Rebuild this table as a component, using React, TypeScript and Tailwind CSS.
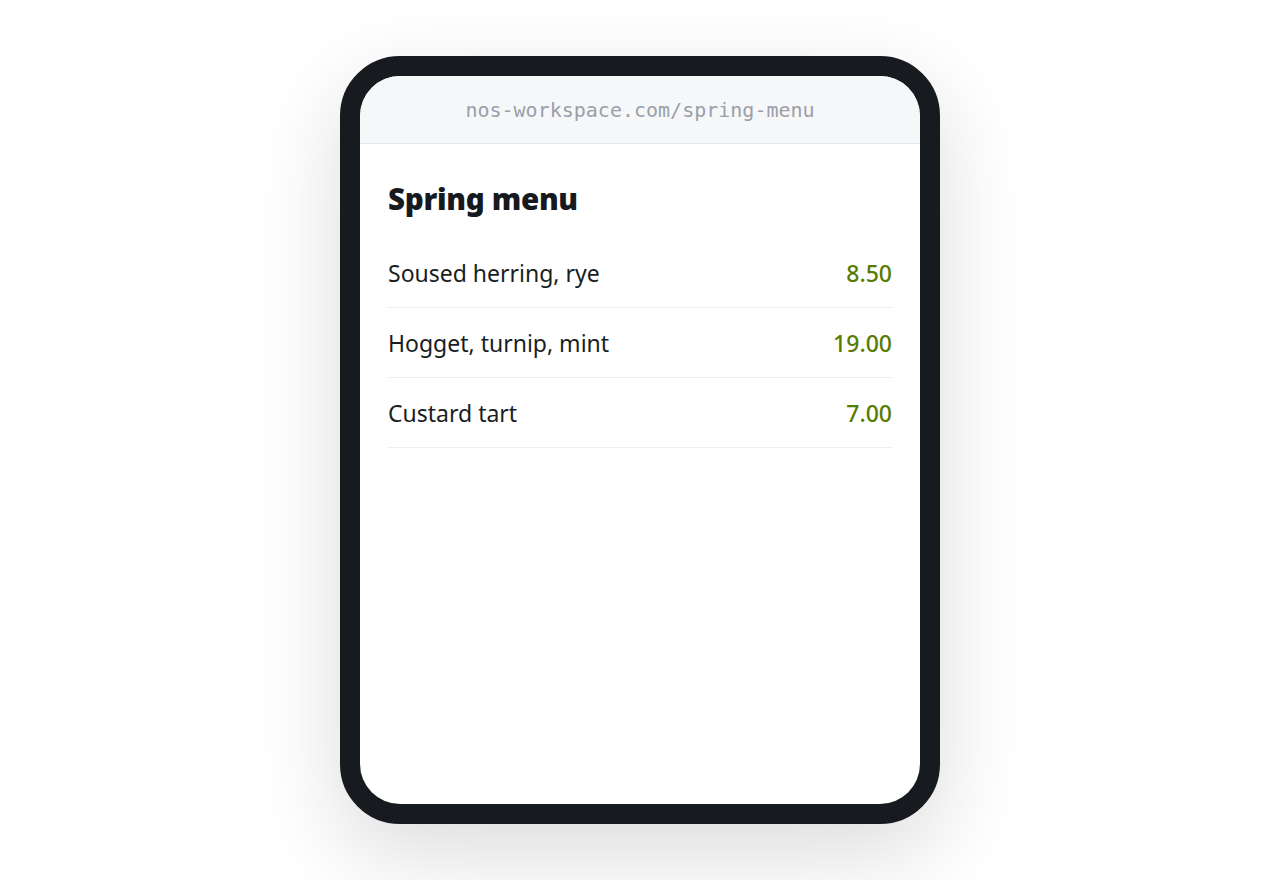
const items = [
  { name: 'Soused herring, rye', price: '8.50' },
  { name: 'Hogget, turnip, mint', price: '19.00' },
  { name: 'Custard tart', price: '7.00' },
]

export default function App() {
  return (
    <div className="flex h-[880px] w-full items-start justify-center bg-white pt-14 font-['Noto_Sans',sans-serif]">
      <div className="h-[768px] w-[600px] rounded-[60px] border-[20px] border-[#171a1f] bg-[#171a1f] shadow-[0_30px_90px_rgba(0,0,0,0.14)]">
        <div className="flex h-full flex-col overflow-hidden rounded-[40px] bg-white">
          <div className="flex h-[68px] shrink-0 items-center justify-center border-b border-[#e4e6ea] bg-[#f6f7f9] font-['DejaVu_Sans_Mono',monospace] text-[20px] text-[#9a9fa8]">
            nos-workspace.com/spring-menu
          </div>

          <div className="px-7 pt-[36px]">
            <h1 className="text-[29.5px] leading-[38px] font-black tracking-[-0.01em] text-[#16191e]">
              Spring menu
            </h1>

            <ul className="mt-5">
              {items.map((item) => (
                <li
                  key={item.name}
                  className="flex h-[70px] items-center justify-between border-b border-[#eceef0] pt-[2px] text-[23px] text-[#1a1d22]"
                >
                  <span>{item.name}</span>
                  <span className="font-medium text-[#587b00]">{item.price}</span>
                </li>
              ))}
            </ul>
          </div>
        </div>
      </div>
    </div>
  )
}
